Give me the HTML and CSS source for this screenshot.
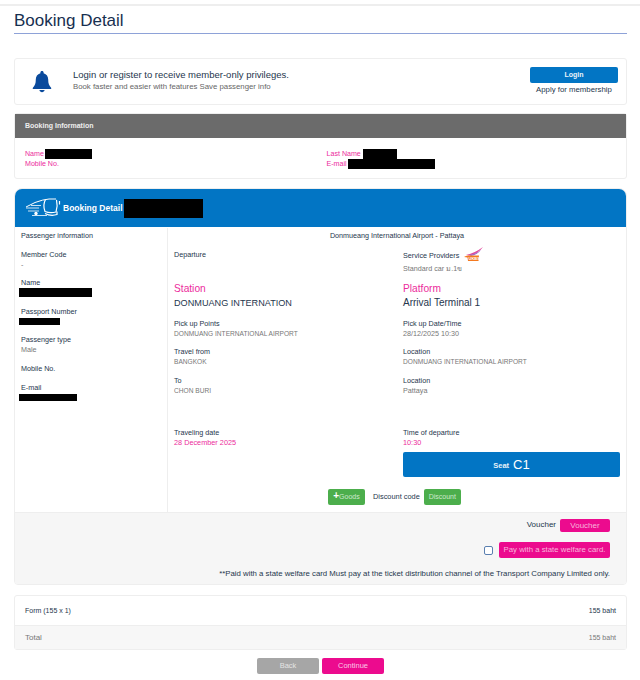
FILE: index.html
```html
<!DOCTYPE html>
<html lang="en">
<head>
<meta charset="utf-8">
<title>Booking Detail</title>
<link rel="stylesheet" href="styles.css">
</head>
<body>
<div class="topline"></div>
<main class="page">
  <h1 class="title">Booking Detail</h1>

  <section class="card login">
    <svg class="bell" viewBox="0 0 20 22" width="20" height="22" aria-hidden="true">
      <path fill="#0a4a9c" d="M10 0c1 0 1.6.7 1.6 1.6v.6c3 .8 4.6 3.3 4.6 6.4 0 4 .8 6 2.9 8.1.5.5.2 1.3-.6 1.3H1.5c-.8 0-1.1-.8-.6-1.3C3 14.600 3.800 12.600 3.800 8.600c0-3.100 1.600-5.600 4.600-6.400v-.6C8.400.7 9 0 10 0z"/>
      <path fill="#0a4a9c" d="M7.400 19h5.200c-.3 1.300-1.300 2.200-2.600 2.200S7.700 20.300 7.400 19z"/>
    </svg>
    <div class="login-text">
      <div class="login-main">Login or register to receive member-only privileges.</div>
      <div class="login-sub">Book faster and easier with features Save passenger info</div>
    </div>
    <div class="login-actions">
      <a class="btn-login">Login</a>
      <div class="apply">Apply for membership</div>
    </div>
  </section>

  <section class="card info">
    <header class="info-head">Booking Information</header>
    <div class="info-body">
      <div class="info-col">
        <div class="pink-line">Name <span class="redact r-name"></span></div>
        <div class="pink-line">Mobile No.</div>
      </div>
      <div class="info-col">
        <div class="pink-line">Last Name <span class="redact r-last"></span></div>
        <div class="pink-line">E-mail <span class="redact r-email"></span></div>
      </div>
    </div>
  </section>

  <section class="card detail">
    <header class="detail-head">
      <svg class="bus" viewBox="0 0 36 20" width="36" height="20" aria-hidden="true" fill="none" stroke="#fff">
        <path stroke-width="1" d="M1 9 L10 4.500 Q18 1.500 24 1 L31 1"/>
        <path stroke-width=".8" d="M6 7.500H16M1 10H14M3 13H14M7 17.500H22"/>
        <path stroke-width="1.200" d="M20.500 1.500 Q17.500 7 20 13.500 Q25 15.500 31 14 Q33 8 31.500 1.800"/>
        <path stroke-width="1.200" d="M20 15.500Q26 18.500 32 16.500V13.500M34.500 3V6.500"/>
        <circle cx="11" cy="15.500" r="1.700" fill="#fff" stroke="none"/>
      </svg>
      <span class="detail-title">Booking Detail</span>
      <span class="redact r-booking"></span>
    </header>
    <div class="detail-body">
      <aside class="passenger">
        <div class="pass-title">Passenger information</div>
        <div class="field"><div class="label">Member Code</div><div class="value val-big">-</div></div>
        <div class="field"><div class="label">Name</div><span class="redact r-pname"></span></div>
        <div class="field"><div class="label">Passport Number</div><span class="redact r-pass"></span></div>
        <div class="field"><div class="label">Passenger type</div><div class="value val-big">Male</div></div>
        <div class="field field-short"><div class="label">Mobile No.</div></div>
        <div class="field"><div class="label">E-mail</div><span class="redact r-pmail"></span></div>
      </aside>
      <div class="trip">
        <div class="route">Donmueang International Airport - Pattaya</div>
        <div class="trip-grid">
          <div class="trip-col">
            <div class="top-field"><div class="label">Departure</div></div>
            <div class="place-label">Station</div>
            <div class="place">DONMUANG INTERNATION</div>
            <div class="field"><div class="label">Pick up Points</div><div class="value">DONMUANG INTERNATIONAL AIRPORT</div></div>
            <div class="field"><div class="label">Travel from</div><div class="value">BANGKOK</div></div>
            <div class="field"><div class="label">To</div><div class="value">CHON BURI</div></div>
            <div class="field when"><div class="label">Traveling date</div><div class="value pink">28 December 2025</div></div>
          </div>
          <div class="trip-col">
            <div class="top-field">
              <div class="label provider">Service Providers
                <svg class="logo" viewBox="0 0 20 14" width="20" height="14" aria-hidden="true">
                  <path fill="#e0489c" d="M2 8 Q11 6 19 0 Q14 7 5 8.500z"/>
                  <path fill="#9a6cc8" d="M5 8 Q12 7 17 3 Q13 8 7 9z"/>
                  <path fill="#f47a20" d="M0 10 Q2 8 6 8.500 H15 L14.500 14 H4 L3.500 10.500 Q2 10 0 10z"/>
                  <text class="logo-text" x="4.500" y="13">UKBS</text>
                </svg>
              </div>
              <div class="value std">Standard car ม.1ข</div>
            </div>
            <div class="place-label">Platform</div>
            <div class="place place-wide">Arrival Terminal 1</div>
            <div class="field"><div class="label">Pick up Date/Time</div><div class="value val-big">28/12/2025 10:30</div></div>
            <div class="field"><div class="label">Location</div><div class="value">DONMUANG INTERNATIONAL AIRPORT</div></div>
            <div class="field"><div class="label">Location</div><div class="value val-big">Pattaya</div></div>
            <div class="field when"><div class="label">Time of departure</div><div class="value pink">10:30</div></div>
            <div class="seat"><span class="seat-word">Seat</span><span class="seat-no">C1</span></div>
          </div>
        </div>
        <div class="extras">
          <a class="btn-green btn-goods"><b class="plus">+</b>Goods</a>
          <span class="extras-label">Discount code</span>
          <a class="btn-green btn-discount">Discount</a>
        </div>
      </div>
    </div>
    <footer class="detail-foot">
      <div class="foot-row voucher-row"><span>Voucher</span><a class="btn-pink btn-voucher">Voucher</a></div>
      <div class="foot-row welfare-row"><span class="check"></span><a class="btn-pink btn-welfare">Pay with a state welfare card.</a></div>
      <div class="note">**Paid with a state welfare card Must pay at the ticket distribution channel of the Transport Company Limited only.</div>
    </footer>
  </section>

  <section class="card summary">
    <div class="sum-row"><span>Form (155 x 1)</span><span>155 baht</span></div>
    <div class="sum-total"><span>Total</span><span>155 baht</span></div>
  </section>

  <div class="actions">
    <a class="btn-back">Back</a>
    <a class="btn-continue">Continue</a>
  </div>
</main>
</body>
</html>
```
FILE: styles.css
```css
* { box-sizing: border-box; }
html, body { margin: 0; padding: 0; height: 680px; overflow: hidden; background: #fff; }
body { font-family: "Liberation Sans", Arial, "Noto Sans", sans-serif; color: #25364d; font-size: 7.200px; line-height: 10px; }
.topline { height: 6px; border-bottom: 2px solid #eee; }
.page { padding: 0 13px 0 14px; }
.title { margin: 0; height: 28px; font-size: 17px; line-height: 30px; font-weight: 400; color: #172f50; border-bottom: 1px solid #8ea2d8; }
.card { border: 1px solid #eee; border-radius: 3px; background: #fff; }

.login { margin-top: 24px; height: 47px; display: flex; align-items: center; padding: 0 8px 0 17px; }
.bell { flex: none; margin-right: 21px; }
.login-text { flex: 1; margin-top: -3px; }
.login-main { font-size: 9.500px; line-height: 12px; color: #25364d; }
.login-sub { font-size: 7.800px; line-height: 11px; color: #666; }
.login-actions { width: 88px; text-align: center; margin-top: -2px; }
.btn-login { display: block; height: 16px; background: #0275c4; border-radius: 2px; color: #eaf3fa; font-size: 7px; font-weight: 700; line-height: 16px; }
.apply { font-size: 7.800px; line-height: 11px; margin-top: 1px; color: #25364d; white-space: nowrap; }

.info { margin-top: 8px; height: 66px; }
.info-head { height: 24px; background: #6b6b6b; color: #eee; padding-left: 10px; font-size: 7px; font-weight: 700; line-height: 24px; }
.info-body { display: grid; grid-template-columns: 301.500px 1fr; padding: 10px 10px 0; }
.pink-line { color: #ec2c9c; height: 10px; line-height: 10px; font-size: 7.100px; white-space: nowrap; padding-top: 1px; }
.redact { display: inline-block; background: #000; vertical-align: top; }
.r-name { width: 47px; height: 10px; margin-left: -1px; }
.r-last { width: 34px; height: 10px; }
.r-email { width: 87px; height: 10px; margin-left: -1px; }

.detail { margin-top: 9px; height: 397px; border-radius: 8px 8px 4px 4px; overflow: hidden; display: flex; flex-direction: column; }
.detail-head { flex: none; height: 38px; background: #0275c4; display: flex; align-items: center; padding-left: 10px; color: #fff; }
.bus { flex: none; margin-right: 2px; }
.detail-title { font-size: 8.500px; font-weight: 700; margin-right: 1px; }
.r-booking { width: 79px; height: 19px; }
.detail-body { flex: none; height: 285px; display: flex; border-top: 1px solid #fff; }
.passenger { flex: none; width: 153px; border-right: 1px solid #eee; padding: 3px 0 0 6px; }
.pass-title { height: 19px; }
.field { height: 28.400px; }
.field-short { height: 19px; }
.label { height: 10px; color: #25364d; white-space: nowrap; }
.value { height: 10px; color: #777; white-space: nowrap; font-size: 6.600px; }
.val-big { font-size: 7.200px; }
.passenger .redact { display: block; margin-left: -2px; }
.r-pname { width: 73px; height: 9px; }
.r-pass { width: 41px; height: 7px; margin-top: 1px; }
.r-pmail { width: 58px; height: 7px; margin-top: 1px; }
.trip { flex: 1; display: flex; flex-direction: column; padding: 3px 6px 0; min-width: 0; }
.route { text-align: center; height: 10px; }
.trip-grid { display: grid; grid-template-columns: 229px 1fr; flex: none; height: 237px; }
.top-field { height: 34px; padding-top: 9px; }
.provider { display: flex; align-items: center; height: 10px; margin-top: 1px; }
.logo { margin-left: 5px; margin-top: -4px; }
.logo-text { font-size: 4px; font-weight: 700; fill: #fff; }
.std { margin-top: 3px; font-size: 7.200px; }
.place-label { margin-top: 7px; color: #ec2c9c; font-size: 10.200px; line-height: 13px; }
.place { font-size: 9.150px; line-height: 14px; color: #25364d; height: 24px; padding-top: 1px; white-space: nowrap; }
.place-wide { font-size: 10px; }
.when { margin-top: 24px; height: 24px; }
.pink { color: #ec2c9c; font-size: 7.300px; }
.seat { height: 25px; background: #0275c4; border-radius: 2px; color: #fff; display: flex; align-items: center; justify-content: center; }
.seat-word { font-size: 7.500px; font-weight: 700; margin-right: 4px; padding-top: 2px; opacity: .9; }
.seat-no { font-size: 13px; }
.extras { display: flex; align-items: center; height: 16px; margin-top: 11px; padding-left: 154px; }
.btn-green { background: #4cae4c; color: #cfe9cf; border-radius: 2px; height: 16px; line-height: 16px; text-align: center; display: block; font-size: 7px; }
.btn-goods { width: 37px; }
.plus { color: #fff; font-size: 10px; line-height: 0; }
.extras-label { margin: 0 4px 0 8px; white-space: nowrap; font-size: 7.400px; }
.btn-discount { width: 37px; }

.detail-foot { flex: 1; background: #f6f6f6; border-top: 1px solid #eee; padding: 5px 16px 0 0; }
.foot-row { display: flex; justify-content: flex-end; align-items: center; }
.btn-pink { display: block; background: #ec0b8e; color: #f8b6dc; border-radius: 2px; text-align: center; font-size: 8px; }
.voucher-row { height: 14px; font-size: 8px; }
.voucher-row span { margin-right: 4px; }
.btn-voucher { width: 50px; height: 13px; line-height: 13px; }
.welfare-row { height: 16px; margin-top: 10px; }
.check { width: 9px; height: 9px; border: 1px solid #5a7fb0; border-radius: 2px; background: #fff; margin-right: 6px; }
.btn-welfare { width: 111px; height: 16px; line-height: 16px; font-size: 7.800px; }
.note { text-align: right; margin-top: 11px; white-space: nowrap; font-size: 7.800px; }

.summary { margin-top: 10px; height: 55px; font-size: 7px; }
.sum-row, .sum-total { display: flex; justify-content: space-between; align-items: center; padding: 0 10px; }
.sum-row { height: 30px; border-bottom: 1px solid #eee; }
.sum-total { height: 23px; background: #f7f7f7; color: #777; }
.sum-total span:first-child { font-size: 8px; }
.actions { display: flex; justify-content: center; gap: 3px; margin-top: 8px; }
.btn-back, .btn-continue { display: block; width: 62px; height: 16px; line-height: 16px; text-align: center; border-radius: 2px; font-size: 7.500px; }
.btn-back { background: #a6a6a6; color: #e4e4e4; }
.btn-continue { background: #ec0b8e; color: #fbc8e6; }
```
